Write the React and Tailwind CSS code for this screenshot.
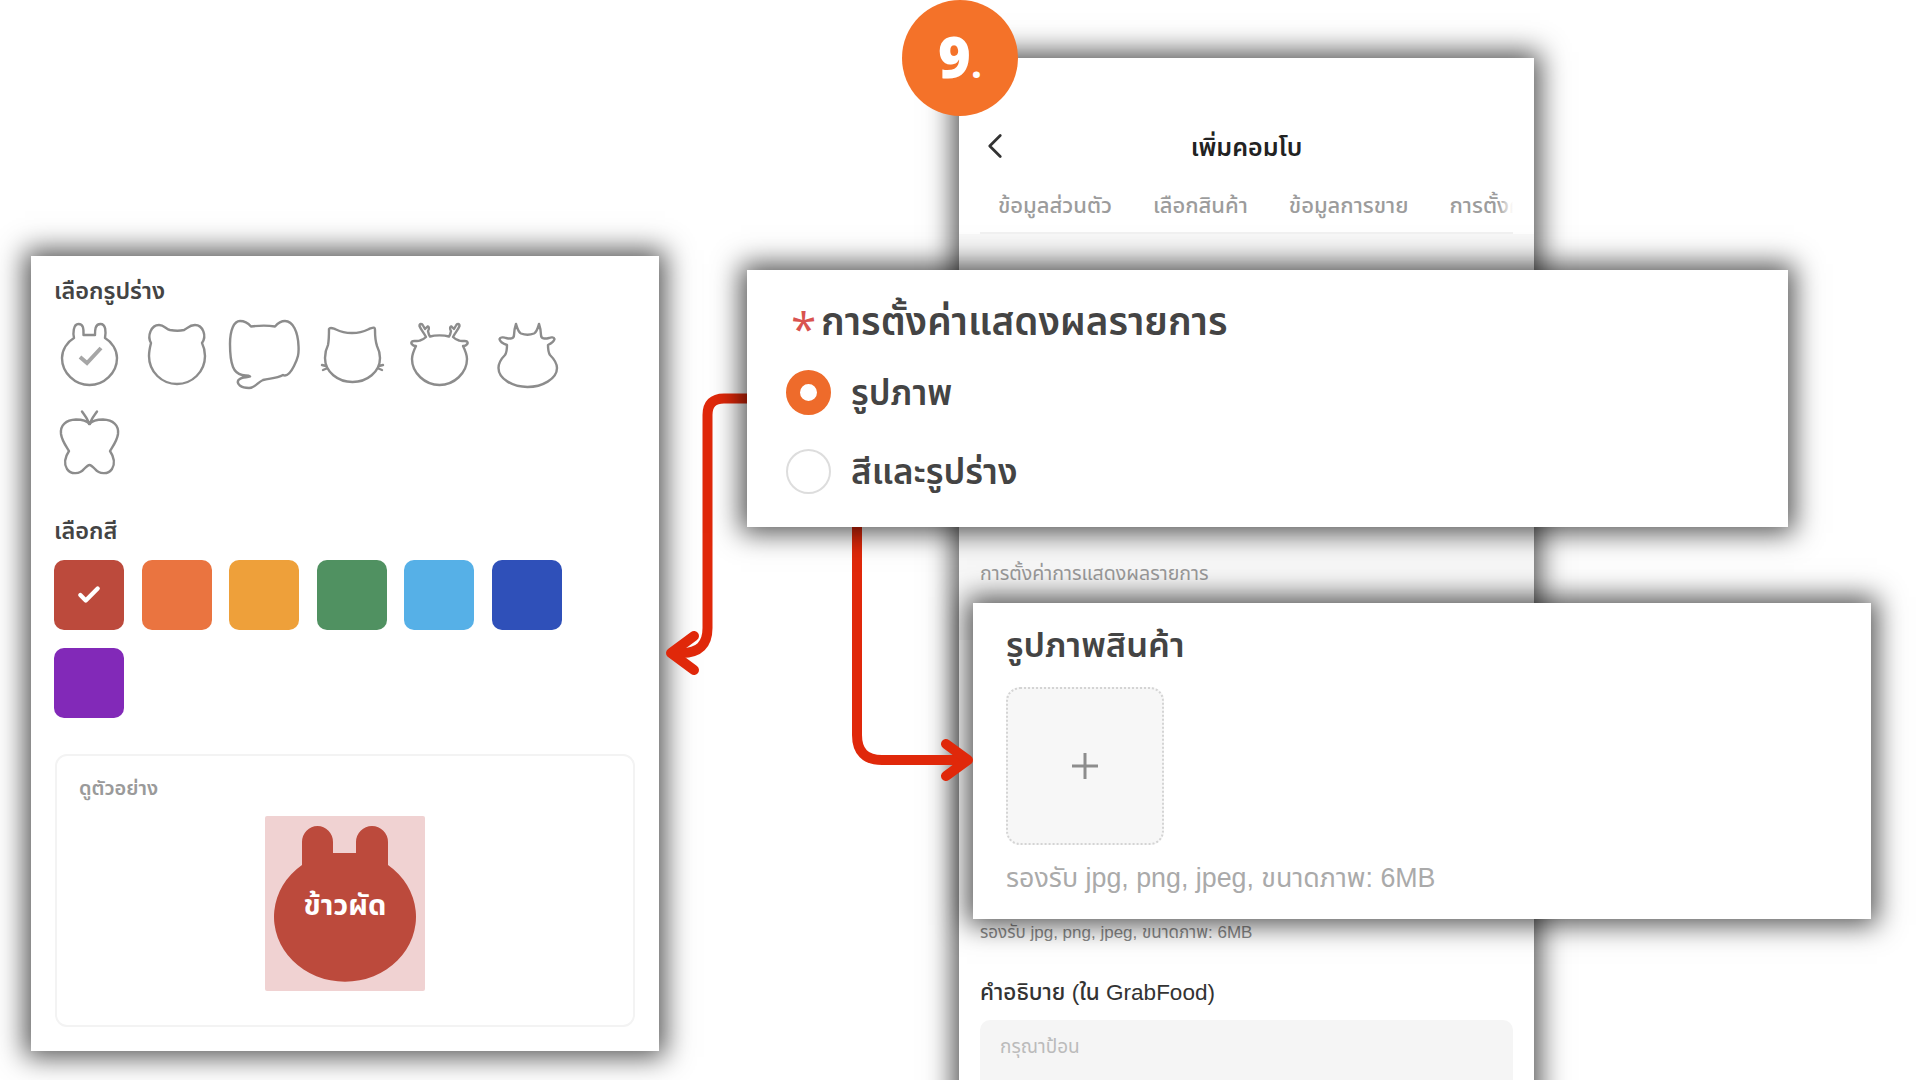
import { ChevronLeft, Check } from 'lucide-react';

const SHADOW = 'shadow-[0_0_26px_6px_rgba(0,0,0,0.68)]';

// outlines traced from the reference, each inside a 70x70 cell
const shapes = [
  'M20 18C19 14 19 4 24.5 4C30 4 29.5 10 29.5 15L41 15C41 10 41 4 46.5 4C52 4 52 12 51 18C58 22 63 30 63 38C63 53 50 65 35.5 65C21 65 8 53 8 38C8 30 13 22 20 18Z',
  'M9 23C5 16 9 5 17 5C22 5 24 9 28 10C33 11 38 11 42 10C45 9 47 5 53 5C61 5 65 16 60 23C62 27 63 32 63 36C63 52 50 64 35 64C20 64 7 52 7 36C7 32 8 27 9 23Z',
  'M22 6.500C19 3 15 1 11 1C5 1 1 10 1 24C1 34 2 42 4 47C6 52 9 54 13 55C16 56 19 55 21 56.500C18 58 13 56 9.500 60C7 64 12 68 20 68C26 68 29 62 34 60C40 58 47 59 54 55C58 57 62 52 65 46C69 38 70 34 69.500 26C69 12 64 1 56 1C52 1 49 3 46 6.500C40 5.500 30 5.500 22 6.500Z',
  'M12 9C13 7 15 8 18 9C22 11 25 13 35 13C45 13 48 11 52 9C55 8 58 6 58 10C58 15 58 20 60 26C62 30 63 34 63 38C63 52 50 62 35.500 62C21 62 8 52 8 38C8 34 9 29 11 25C12 20 12 14 12 9ZM5 45L9 46M6 50L9.500 48.500M62 46L66 45M61.500 48.500L65 50',
  'M12 26C8 26 6.500 23 8 21.500C10 20 13 22 16 20.500C18 20 20 19 22 17C20 13 17 10 15.500 6C15.500 3.500 18 3.500 19 5.500L21 9L23.500 6.500C25.500 6 25 10 24 11C24.500 14 25 15 26 16.500C31 15 40 15 45 16.500C46 15 46.500 14 47 11C46 10 45.500 6 47.500 6.500L50 9L52 5.500C53 3.500 55.500 3.500 55.500 6C54 10 51 13 49 17C51 19 53 20 55 20.500C58 22 61 20 63 21.500C64.500 23 63 26 59 26C61 30 63 34 63 39C63 53 50 65 35.500 65C21 65 8 53 8 39C8 34 10 30 12 26Z',
  'M15 25C12 24 8 22 7.500 19C8 17 12 17 14 18C18 19 22 19 22 15C22 11 23 7 24 4C25 7 26 12 29 13.500C33 15 38 15 42 13.500C45 12 46 7 47 4C48 7 49 11 49 15C49 19 53 19 57 18C59 17 62 17 62.500 19C62 22 58 24 56 25C56 28 56 32 58 35C62 39 65 43 65 48C65 59 50 67 35.500 67C21 67 6.500 59 6.500 48C6.500 43 10 38 13 35C15 32 15 28 15 25Z',
  'M35.500 16C33 13 28 11.500 22 11.500C12 12 6 17 7 26C8 33 12 38 15 43C11 49 10 56 13 61C17 67 26 66 30 61C32 59 34 57 35.500 57C37 57 39 59 41 61C45 66 54 67 58 61C61 56 60 49 56 43C59 38 63 33 64 26C65 17 59 12 49 11.500C43 11.500 38 13 35.500 16ZM35 16C34 11 31 8 28 3.500M36 16C37 11 40 8 43 3.500',
];

const colors = ['#bc4a3c', '#ea7440', '#eea03a', '#509161', '#56b0e7', '#2f50b9', '#8229b8'];

const ShapePicker = () => (
  <div className="grid grid-cols-[repeat(6,70px)] gap-x-[17.6px] gap-y-[18px]">
    {shapes.map((d, i) => (
      <svg key={i} width="70" height="70" viewBox="0 0 70 70" fill="none" className="overflow-visible">
        <path d={d} stroke="#8c8c8c" strokeWidth="2.4" strokeLinejoin="round" strokeLinecap="round" />
        {i === 0 && (
          <path d="M26 37L33 43L47 28" stroke="#a6a6a6" strokeWidth="4" />
        )}
      </svg>
    ))}
  </div>
);

const ColorPicker = () => (
  <div className="grid grid-cols-[repeat(6,70px)] gap-x-[17.6px] gap-y-[18px]">
    {colors.map((c, i) => (
      <div key={c} className="w-[70px] h-[70px] rounded-[10px] flex items-center justify-center" style={{ backgroundColor: c }}>
        {i === 0 && <Check className="w-[26px] h-[26px] text-white" strokeWidth={4} />}
      </div>
    ))}
  </div>
);

const Preview = () => (
  <div className="mt-[36px] w-[580px] h-[273px] ml-px border-2 border-[#f3f3f3] rounded-[12px] pt-[18px] px-[22px]">
    <p className="text-[20px] leading-[28px] font-semibold text-[#9a9a9a]">ดูตัวอย่าง</p>
    <div className="relative mt-[14px] mx-auto w-[160px] h-[175px] bg-[#f0d2d2] rounded-[2px]">
      <svg width="160" height="175" viewBox="0 0 160 175">
        <path
          d="M37 49V26A15.500 16 0 0 1 68 26V37H91V26A16 16 0 0 1 123 26V49A71 65 0 1 1 37 49Z"
          fill="#bc4a3c"
        />
      </svg>
      <span className="absolute left-0 right-0 top-[70px] text-center text-[29px] leading-[38px] font-bold text-white">ข้าวผัด</span>
    </div>
  </div>
);

const ShapePanel = () => (
  <div className={`absolute left-[31px] top-[256px] w-[628px] h-[795px] bg-white pt-[20px] pl-[23px] ${SHADOW}`}>
    <h3 className="text-[23.500px] leading-[30px] font-semibold text-[#444444] mb-[14px]">เลือกรูปร่าง</h3>
    <ShapePicker />
    <h3 className="text-[23.500px] leading-[30px] font-semibold text-[#444444] mt-[38px] mb-[14px]">เลือกสี</h3>
    <ColorPicker />
    <Preview />
  </div>
);

const PhonePanel = () => (
  <div className={`absolute left-[959px] top-[58px] w-[575px] h-[1060px] bg-white ${SHADOW}`}>
    <div className="relative h-[121px] pt-[71px] text-center text-[25px] leading-[36px] font-semibold text-[#222222]">
      <ChevronLeft className="absolute left-[15px] top-[67px] w-[42px] h-[42px] text-[#333333]" strokeWidth={1.6} />
      เพิ่มคอมโบ
    </div>
    <div className="relative mx-[21px] h-[55px] flex items-center gap-[41px] pl-[18px] overflow-hidden border-b-2 border-[#f2f2f2] text-[22px] text-[#9c9c9c] font-medium whitespace-nowrap">
      <span>ข้อมูลส่วนตัว</span>
      <span>เลือกสินค้า</span>
      <span>ข้อมูลการขาย</span>
      <span>การตั้งค่า</span>
      <div className="absolute right-0 top-0 bottom-0 w-[15px] bg-gradient-to-r from-white/0 to-white" />
    </div>
    <div className="h-[406px] bg-[#f8f8f8] pt-[326px] pl-[21px]">
      <p className="text-[19.600px] leading-[26px] text-[#9a9a9a]">การตั้งค่าการแสดงผลรายการ</p>
    </div>
    <div className="px-[21px] pt-[281px]">
      <p className="text-[17px] leading-[24px] text-[#8a8a8a]">รองรับ jpg, png, jpeg, ขนาดภาพ: 6MB</p>
      <p className="mt-[33px] text-[22.500px] leading-[30px] font-medium text-[#333333]">คำอธิบาย (ใน GrabFood)</p>
      <div className="mt-[12px] h-[120px] bg-[#f5f5f5] rounded-[10px] px-[20px] pt-[14px] text-[19px] leading-[26px] text-[#bbbbbb]">กรุณาป้อน</div>
    </div>
  </div>
);

const StepBadge = () => (
  <div className="absolute left-[902px] top-0 w-[116px] h-[116px] rounded-full bg-[#f47229] pb-[4px] flex items-center justify-center text-white font-['Open_Sans',sans-serif] font-extrabold text-[56px] leading-none">
    <span className="flex items-baseline">9<span className="text-[40px] font-bold">.</span></span>
  </div>
);

const ImageCard = () => (
  <div className={`absolute left-[973px] top-[603px] w-[898px] h-[316px] bg-white pt-[22px] pl-[33px] ${SHADOW}`}>
    <h3 className="text-[34.500px] leading-[40px] font-semibold text-[#444444]">รูปภาพสินค้า</h3>
    <div className="mt-[22px] w-[158px] h-[158px] rounded-[14px] border-2 border-dotted border-[#d4d4d4] bg-[#f7f7f7] flex items-center justify-center">
      <svg width="28" height="28" viewBox="0 0 28 28" stroke="#8d8d8d" strokeWidth="3"><path d="M14 1V27M1 14H27" /></svg>
    </div>
    <p className="mt-[16px] text-[26.800px] leading-[34px] text-[#aaaaaa]">รองรับ jpg, png, jpeg, ขนาดภาพ: 6MB</p>
  </div>
);

const DisplayCard = () => (
  <div className={`absolute left-[747px] top-[270px] w-[1041px] h-[257px] bg-white pt-[28px] pl-[39px] ${SHADOW}`}>
    <div className="flex items-center h-[48px]">
      <span className="w-[35px] pl-[5px] pt-[12px] text-[46px] leading-[48px] text-[#d9534f] font-['Open_Sans',sans-serif]">*</span>
      <h2 className="text-[38.600px] leading-[48px] font-semibold text-[#444444]">การตั้งค่าแสดงผลรายการ</h2>
    </div>
    <div className="mt-[24px] flex items-center gap-[20px] h-[45px]">
      <span className="w-[45px] h-[45px] rounded-full border-[14px] border-[#ee6b2b] bg-white" />
      <span className="text-[35px] leading-[45px] font-semibold text-[#444444]">รูปภาพ</span>
    </div>
    <div className="mt-[34px] flex items-center gap-[20px] h-[45px]">
      <span className="w-[45px] h-[45px] rounded-full border-2 border-[#dddddd] bg-white" />
      <span className="text-[35px] leading-[45px] font-semibold text-[#444444]">สีและรูปร่าง</span>
    </div>
  </div>
);

const Arrows = () => (
  <svg className="absolute left-0 top-0" width="1920" height="1080" viewBox="0 0 1920 1080" fill="none" stroke="#e0280a" strokeWidth="10" strokeLinecap="round" strokeLinejoin="round">
    <path d="M750 398.500H724Q707.500 398.500 707.500 415V628Q707.500 653 682 653H672" />
    <path d="M694 636L671 653L694 670" />
    <path d="M857 520V735Q857 760 882 760H966" />
    <path d="M946 744L968 760L946 776" />
  </svg>
);

export default function App() {
  return (
    <div className="relative w-[1920px] h-[1080px] overflow-hidden bg-white font-['Liberation_Sans','Noto_Sans_Thai','Noto_Sans',sans-serif]">
      <ShapePanel />
      <PhonePanel />
      <StepBadge />
      <ImageCard />
      <Arrows />
      <DisplayCard />
    </div>
  );
}
